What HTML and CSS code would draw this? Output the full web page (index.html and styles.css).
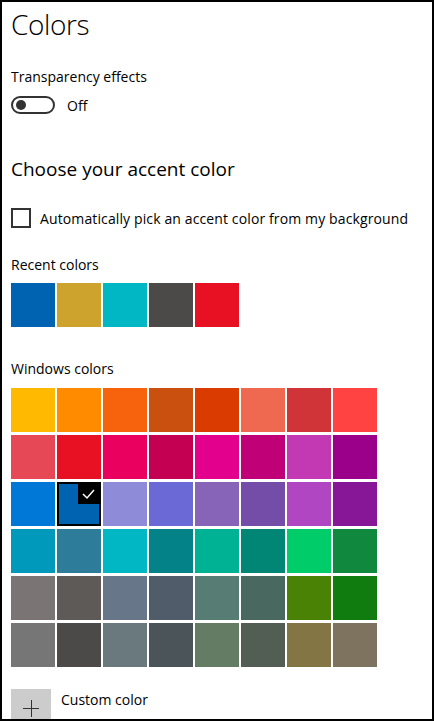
FILE: index.html
```html
<!DOCTYPE html>
<html lang="en">
<head>
<meta charset="UTF-8" />
<meta name="viewport" content="width=device-width, initial-scale=1.0" />
<title>Colors</title>
<link rel="stylesheet" href="styles.css">
</head>
<body>

<div class="window">
  <h1 class="title">Colors</h1>

  <div class="label label-first">Transparency effects</div>
  <div class="toggle-row">
    <span class="toggle"><span class="knob"></span></span>
    <span class="toggle-text">Off</span>
  </div>

  <h2 class="subtitle">Choose your accent color</h2>

  <label class="check-row">
    <span class="checkbox"></span>
    <span class="check-text">Automatically pick an accent color from my background</span>
  </label>

  <div class="label label-recent">Recent colors</div>
  <div class="recent">
    <span class="swatch" style="background:#0063b1"></span>
    <span class="swatch" style="background:#cea32d"></span>
    <span class="swatch" style="background:#00b7c3"></span>
    <span class="swatch" style="background:#4c4a48"></span>
    <span class="swatch" style="background:#e81123"></span>
  </div>

  <div class="label label-windows">Windows colors</div>
  <div class="grid" id="grid"></div>

  <div class="custom-row">
    <span class="custom-box">
      <svg width="40" height="40" viewBox="0 0 40 40">
        <line x1="12" y1="19.5" x2="28" y2="19.5" stroke="#333" stroke-width="1"/>
        <line x1="20.5" y1="11" x2="20.5" y2="28" stroke="#333" stroke-width="1"/>
      </svg>
    </span>
    <span class="custom-text">Custom color</span>
  </div>
</div>

<script>
// палитра акцентных цветов, по строкам
const colors = [
  '#ffb900','#ff8c00','#f7630c','#ca5010','#da3b01','#ef6950','#d13438','#ff4343',
  '#e74856','#e81123','#ea005e','#c30052','#e3008c','#bf0077','#c239b3','#9a0089',
  '#0078d7','#0063b1','#8e8cd8','#6b69d6','#8764b8','#744da9','#b146c2','#881798',
  '#0099bc','#2d7d9a','#00b7c3','#038387','#00b294','#018574','#00cc6a','#10893e',
  '#7a7574','#5d5a58','#68768a','#515c6b','#567c73','#486860','#498205','#107c10',
  '#767676','#4c4a48','#69797e','#4a5459','#647c64','#525e54','#847545','#7e735f'
];
const selected = 17;

const grid = document.getElementById('grid');
colors.forEach((c, i) => {
  const cell = document.createElement('span');
  cell.className = 'swatch';
  cell.style.background = c;
  if (i === selected) {
    cell.classList.add('selected');
    cell.innerHTML = '<span class="tick"><svg width="21" height="20" viewBox="0 0 21 20"><polyline points="5,10 9,14 16,6" fill="none" stroke="#fff" stroke-width="1.5"/></svg></span>';
  }
  grid.appendChild(cell);
});
</script>

</body>
</html>
```

FILE: styles.css
```css
html, body {
  margin: 0;
  padding: 0;
  background: #fff;
}

body {
  font-family: 'Open Sans', 'Segoe UI', sans-serif;
  color: #000;
}

.window {
  box-sizing: border-box;
  width: 434px;
  height: 721px;
  border: 2px solid #000;
  padding-left: 9px;
  overflow: hidden;
}

.title {
  margin: 4px 0 0 0;
  font-size: 28px;
  font-weight: 300;
  line-height: 36px;
  letter-spacing: -0.4px;
}

.label {
  font-size: 14px;
  line-height: 20px;
}
.label-first { margin-top: 25px; }
.label-recent { margin-top: 27px; }
.label-windows { margin-top: 32px; }

.toggle-row {
  display: flex;
  align-items: center;
  margin-top: 9px;
  height: 18px;
}
.toggle {
  box-sizing: border-box;
  width: 44px;
  height: 18px;
  border: 2px solid #333;
  border-radius: 9px;
  display: flex;
  align-items: center;
  padding-left: 3px;
}
.knob {
  width: 10px;
  height: 10px;
  border-radius: 50%;
  background: #333;
}
.toggle-text {
  margin-left: 12px;
  font-size: 14px;
  line-height: 18px;
  padding-top: 2px;
}

.subtitle {
  margin: 41px 0 0 0;
  font-size: 19px;
  font-weight: 400;
  line-height: 28px;
}

.check-row {
  display: flex;
  align-items: center;
  gap: 9px;
  margin-top: 25px;
  height: 20px;
  font-size: 14px;
  line-height: 20px;
}
.check-text {
  letter-spacing: 0.12px;
  padding-top: 1px;
}
.checkbox {
  box-sizing: border-box;
  width: 20px;
  height: 20px;
  border: 2px solid #333;
  flex: none;
}

.recent {
  display: flex;
  gap: 2px;
  margin-top: 8px;
}

.swatch {
  display: block;
  width: 44px;
  height: 44px;
}

.grid {
  display: grid;
  grid-template-columns: repeat(8, 44px);
  column-gap: 2px;
  row-gap: 3px;
  margin-top: 9px;
}

.swatch.selected {
  box-sizing: border-box;
  border: 2px solid #000;
  position: relative;
}
.tick {
  position: absolute;
  top: 0;
  right: 0;
  width: 21px;
  height: 20px;
  background: #000;
  display: flex;
}

.custom-row {
  display: flex;
  align-items: flex-start;
  margin-top: 22px;
}
.custom-box {
  width: 40px;
  height: 40px;
  background: #ccc;
  display: flex;
}
.custom-text {
  margin-left: 10px;
  font-size: 14px;
  line-height: 20px;
  padding-top: 1px;
}
```
